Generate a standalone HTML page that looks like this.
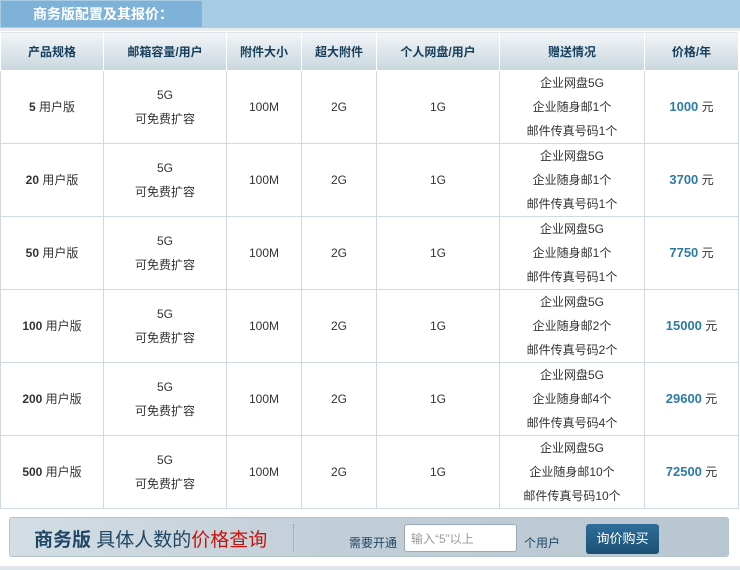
<!DOCTYPE html>
<html><head><meta charset="utf-8"><style>
*{margin:0;padding:0;box-sizing:border-box}
body{width:740px;height:570px;background:#fff;font-family:"Liberation Sans","Noto Sans CJK SC",sans-serif;font-size:12px;color:#333;position:relative;overflow:hidden}
.top{position:absolute;left:0;top:0;width:740px;height:28px;background:#a8cce4}
.tab{position:absolute;left:1px;top:1px;width:201px;height:26px;background:#7fb2d8;color:#fff;font-weight:bold;font-size:14px;line-height:26px;padding-left:32px}
.gap{position:absolute;left:0;top:28px;width:740px;height:3px;background:#e8ecef}
table{position:absolute;left:0;top:31px;border-collapse:collapse;width:738px;table-layout:fixed}
td,th{border:1px solid #d0dae2;text-align:center;vertical-align:middle}
th{height:39px;background:linear-gradient(#f2f5f7,#c9d6df);color:#173f5c;font-size:12px;font-weight:bold;border-color:#fff}
td{height:73px;line-height:24px;font-size:12px;color:#333}
td b{color:#333}
.p{color:#2d7ba5;font-weight:bold;font-size:13px}
.bot{position:absolute;left:9px;top:517px;width:720px;height:40px;border-radius:3px;background:linear-gradient(90deg,#d3dde4,#c2ced8 45%,#b9c7d2);border:1px solid #b5c3cd}
.t1{position:absolute;left:24px;top:7px;font-size:19px;color:#1f4664;font-weight:bold}
.t1 span{font-weight:normal}
.t1 i{font-style:normal;color:#c9140e;font-weight:normal}
.dv{position:absolute;left:283px;top:6px;height:28px;border-left:1px dotted #8a9aa6}
.need{position:absolute;left:339px;top:16px;color:#1f4664;font-size:12px}
.inp{position:absolute;left:394px;top:6px;width:113px;height:28px;background:#fff;border:1px solid #9aaab6;border-radius:3px;color:#999;padding:5px 0 0 6px;font-size:12px}
.users{position:absolute;left:514px;top:16px;color:#1f4664}
.btn{position:absolute;left:576px;top:6px;width:73px;height:30px;background:linear-gradient(#2e6f9a,#1b4f74);border-radius:3px;color:#fff;text-align:center;line-height:30px;font-size:13px}
.line{position:absolute;left:0;top:566px;width:740px;height:4px;background:#dfe5ea}
</style></head><body>
<div class="top"><div class="tab">商务版配置及其报价：</div></div>
<div class="gap"></div>
<table>
<colgroup><col style="width:103px"><col style="width:123px"><col style="width:75px"><col style="width:75px"><col style="width:123px"><col style="width:145px"><col style="width:94px"></colgroup>
<tr><th>产品规格</th><th>邮箱容量/用户</th><th>附件大小</th><th>超大附件</th><th>个人网盘/用户</th><th>赠送情况</th><th>价格/年</th></tr>
<tr><td><b>5</b> 用户版</td><td>5G<br>可免费扩容</td><td>100M</td><td>2G</td><td>1G</td><td>企业网盘5G<br>企业随身邮1个<br>邮件传真号码1个</td><td><span class="p">1000</span> 元</td></tr>
<tr><td><b>20</b> 用户版</td><td>5G<br>可免费扩容</td><td>100M</td><td>2G</td><td>1G</td><td>企业网盘5G<br>企业随身邮1个<br>邮件传真号码1个</td><td><span class="p">3700</span> 元</td></tr>
<tr><td><b>50</b> 用户版</td><td>5G<br>可免费扩容</td><td>100M</td><td>2G</td><td>1G</td><td>企业网盘5G<br>企业随身邮1个<br>邮件传真号码1个</td><td><span class="p">7750</span> 元</td></tr>
<tr><td><b>100</b> 用户版</td><td>5G<br>可免费扩容</td><td>100M</td><td>2G</td><td>1G</td><td>企业网盘5G<br>企业随身邮2个<br>邮件传真号码2个</td><td><span class="p">15000</span> 元</td></tr>
<tr><td><b>200</b> 用户版</td><td>5G<br>可免费扩容</td><td>100M</td><td>2G</td><td>1G</td><td>企业网盘5G<br>企业随身邮4个<br>邮件传真号码4个</td><td><span class="p">29600</span> 元</td></tr>
<tr><td><b>500</b> 用户版</td><td>5G<br>可免费扩容</td><td>100M</td><td>2G</td><td>1G</td><td>企业网盘5G<br>企业随身邮10个<br>邮件传真号码10个</td><td><span class="p">72500</span> 元</td></tr>
</table>
<div class="bot">
<div class="t1">商务版 <span>具体人数的</span><i>价格查询</i></div>
<div class="dv"></div>
<div class="need">需要开通</div>
<div class="inp">输入“5”以上</div>
<div class="users">个用户</div>
<div class="btn">询价购买</div>
</div>
<div class="line"></div>
</body></html>
